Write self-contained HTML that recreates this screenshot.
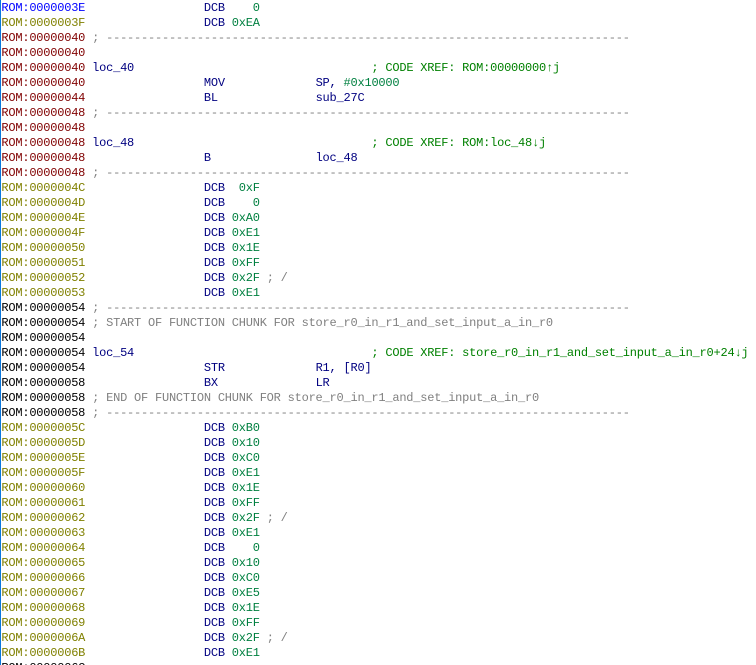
<!DOCTYPE html>
<html><head><meta charset="utf-8"><style>
html,body{margin:0;padding:0;background:#fff;width:756px;height:665px;overflow:hidden}
#b{position:absolute;left:0;top:0;width:1px;height:665px;background:#0a78dc;z-index:2}
pre{position:absolute;left:1.4px;top:1px;margin:0;width:754px;height:664px;overflow:hidden;font:12px/15px "Liberation Mono","DejaVu Sans Mono",monospace;letter-spacing:-0.22px;color:#000}
.u{color:#0000ff}.o{color:#808000}.r{color:#800000}.k{color:#000}
.m{color:#000080}.n{color:#008040}.c{color:#808080}.x{color:#008000}
</style></head><body><div id="b"></div><pre><span class="u">ROM:0000003E</span>                 <span class="m">DCB</span> <span class="n">   0</span>
<span class="o">ROM:0000003F</span>                 <span class="m">DCB</span> <span class="n">0xEA</span>
<span class="r">ROM:00000040</span> <span class="c">; ---------------------------------------------------------------------------</span>
<span class="r">ROM:00000040</span>
<span class="r">ROM:00000040</span> <span class="m">loc_40</span>                                  <span class="x">; CODE XREF: ROM:00000000↑j</span>
<span class="r">ROM:00000040</span>                 <span class="m">MOV</span>             <span class="m">SP, </span><span class="n">#0x10000</span>
<span class="r">ROM:00000044</span>                 <span class="m">BL</span>              <span class="m">sub_27C</span>
<span class="r">ROM:00000048</span> <span class="c">; ---------------------------------------------------------------------------</span>
<span class="r">ROM:00000048</span>
<span class="r">ROM:00000048</span> <span class="m">loc_48</span>                                  <span class="x">; CODE XREF: ROM:loc_48↓j</span>
<span class="r">ROM:00000048</span>                 <span class="m">B</span>               <span class="m">loc_48</span>
<span class="r">ROM:00000048</span> <span class="c">; ---------------------------------------------------------------------------</span>
<span class="o">ROM:0000004C</span>                 <span class="m">DCB</span> <span class="n"> 0xF</span>
<span class="o">ROM:0000004D</span>                 <span class="m">DCB</span> <span class="n">   0</span>
<span class="o">ROM:0000004E</span>                 <span class="m">DCB</span> <span class="n">0xA0</span>
<span class="o">ROM:0000004F</span>                 <span class="m">DCB</span> <span class="n">0xE1</span>
<span class="o">ROM:00000050</span>                 <span class="m">DCB</span> <span class="n">0x1E</span>
<span class="o">ROM:00000051</span>                 <span class="m">DCB</span> <span class="n">0xFF</span>
<span class="o">ROM:00000052</span>                 <span class="m">DCB</span> <span class="n">0x2F</span> <span class="c">; /</span>
<span class="o">ROM:00000053</span>                 <span class="m">DCB</span> <span class="n">0xE1</span>
<span class="k">ROM:00000054</span> <span class="c">; ---------------------------------------------------------------------------</span>
<span class="k">ROM:00000054</span> <span class="c">; START OF FUNCTION CHUNK FOR store_r0_in_r1_and_set_input_a_in_r0</span>
<span class="k">ROM:00000054</span>
<span class="k">ROM:00000054</span> <span class="m">loc_54</span>                                  <span class="x">; CODE XREF: store_r0_in_r1_and_set_input_a_in_r0+24↓j</span>
<span class="k">ROM:00000054</span>                 <span class="m">STR</span>             <span class="m">R1, [R0]</span>
<span class="k">ROM:00000058</span>                 <span class="m">BX</span>              <span class="m">LR</span>
<span class="k">ROM:00000058</span> <span class="c">; END OF FUNCTION CHUNK FOR store_r0_in_r1_and_set_input_a_in_r0</span>
<span class="k">ROM:00000058</span> <span class="c">; ---------------------------------------------------------------------------</span>
<span class="o">ROM:0000005C</span>                 <span class="m">DCB</span> <span class="n">0xB0</span>
<span class="o">ROM:0000005D</span>                 <span class="m">DCB</span> <span class="n">0x10</span>
<span class="o">ROM:0000005E</span>                 <span class="m">DCB</span> <span class="n">0xC0</span>
<span class="o">ROM:0000005F</span>                 <span class="m">DCB</span> <span class="n">0xE1</span>
<span class="o">ROM:00000060</span>                 <span class="m">DCB</span> <span class="n">0x1E</span>
<span class="o">ROM:00000061</span>                 <span class="m">DCB</span> <span class="n">0xFF</span>
<span class="o">ROM:00000062</span>                 <span class="m">DCB</span> <span class="n">0x2F</span> <span class="c">; /</span>
<span class="o">ROM:00000063</span>                 <span class="m">DCB</span> <span class="n">0xE1</span>
<span class="o">ROM:00000064</span>                 <span class="m">DCB</span> <span class="n">   0</span>
<span class="o">ROM:00000065</span>                 <span class="m">DCB</span> <span class="n">0x10</span>
<span class="o">ROM:00000066</span>                 <span class="m">DCB</span> <span class="n">0xC0</span>
<span class="o">ROM:00000067</span>                 <span class="m">DCB</span> <span class="n">0xE5</span>
<span class="o">ROM:00000068</span>                 <span class="m">DCB</span> <span class="n">0x1E</span>
<span class="o">ROM:00000069</span>                 <span class="m">DCB</span> <span class="n">0xFF</span>
<span class="o">ROM:0000006A</span>                 <span class="m">DCB</span> <span class="n">0x2F</span> <span class="c">; /</span>
<span class="o">ROM:0000006B</span>                 <span class="m">DCB</span> <span class="n">0xE1</span>
<span class="k">ROM:0000006C</span></pre></body></html>
